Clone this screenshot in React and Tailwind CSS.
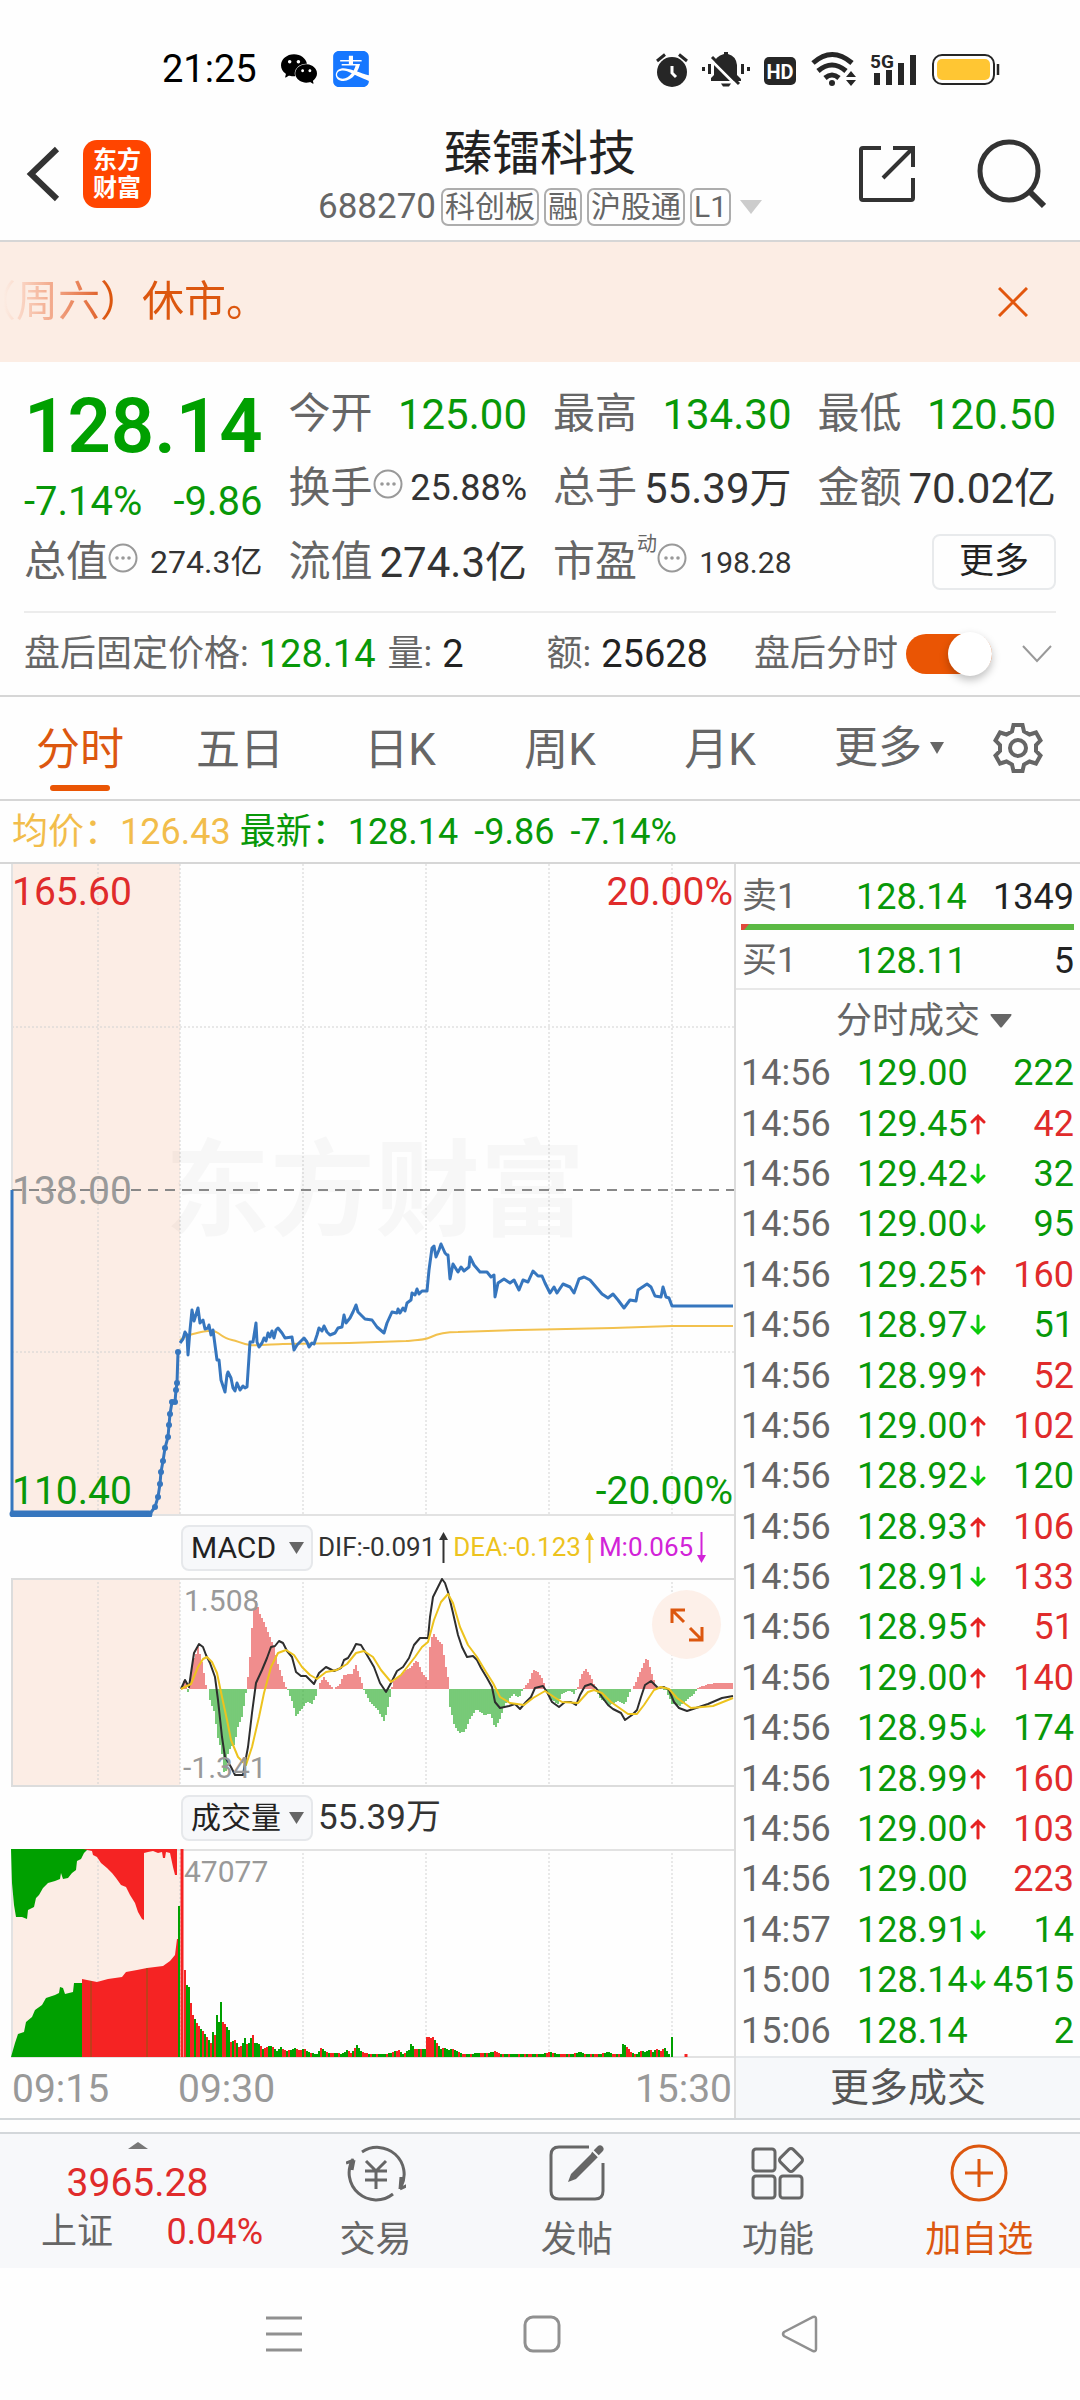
import React, { useState } from 'react';
import { SiWechat, SiAlipay } from 'react-icons/si';

const TABS = ['分时', '五日', '日K', '周K', '月K'];

// [time, price, direction, volume, side]
const TRADES = [
  ['14:56', '129.00', '', '222', 'sell'],
  ['14:56', '129.45', 'up', '42', 'buy'],
  ['14:56', '129.42', 'down', '32', 'sell'],
  ['14:56', '129.00', 'down', '95', 'sell'],
  ['14:56', '129.25', 'up', '160', 'buy'],
  ['14:56', '128.97', 'down', '51', 'sell'],
  ['14:56', '128.99', 'up', '52', 'buy'],
  ['14:56', '129.00', 'up', '102', 'buy'],
  ['14:56', '128.92', 'down', '120', 'sell'],
  ['14:56', '128.93', 'up', '106', 'buy'],
  ['14:56', '128.91', 'down', '133', 'buy'],
  ['14:56', '128.95', 'up', '51', 'buy'],
  ['14:56', '129.00', 'up', '140', 'buy'],
  ['14:56', '128.95', 'down', '174', 'sell'],
  ['14:56', '128.99', 'up', '160', 'buy'],
  ['14:56', '129.00', 'up', '103', 'buy'],
  ['14:56', '129.00', '', '223', 'buy'],
  ['14:57', '128.91', 'down', '14', 'sell'],
  ['15:00', '128.14', 'down', '4515', 'sell'],
  ['15:06', '128.14', '', '2', 'sell'],
];

const GRID_X = [98, 180, 303, 426, 549, 672];

const PRICE =
  '180,479 183,475 185,468 187,471 188,491 190,466 192,446 194,457 198,444 200,459 203,456 205,465 208,464 209,461 211,471 213,466 217,496 219,496 221,516 225,528 227,511 228,508 231,514 233,524 235,527 237,519 240,526 243,522 245,524 247,523 248,508 250,478 253,478 256,459 257,478 259,483 262,479 264,474 266,477 268,469 270,473 272,467 274,474 276,466 278,464 282,469 285,474 292,473 294,486 297,481 301,477 304,474 307,478 309,483 312,479 314,480 317,471 319,464 322,467 324,462 327,468 330,471 335,469 338,464 342,463 344,451 346,459 350,454 353,448 356,441 358,448 365,455 372,456 377,463 384,469 387,459 392,448 397,449 398,445 400,449 403,444 405,447 407,439 411,436 412,429 415,431 417,425 419,430 422,427 427,427 429,406 432,384 434,382 436,393 439,386 441,380 445,389 447,391 448,391 450,415 453,400 458,408 461,403 464,407 469,403 470,393 474,401 480,408 487,408 491,413 494,411 495,433 498,419 504,415 510,419 514,416 519,426 523,416 528,418 533,407 538,412 542,412 545,419 550,429 554,423 557,429 563,420 570,423 574,429 579,415 584,413 590,416 596,423 602,430 608,434 613,430 618,436 624,444 630,436 636,437 638,426 647,420 651,423 655,432 661,433 663,423 666,433 669,434 672,442 733,442';

const AVERAGE =
  'M180 476 C185 472 188 471 193 470 S203 467 208 467 S214 466 218 469 S226 475 232 476 S242 480 250 481 S275 480 283 480 L349 479 L406 477 C420 476 425 476 431 473 S445 468 458 468 L519 466 L613 464 L672 462 H733';

const AUCTION = [
  [149, 651], [155, 643], [158, 633], [160, 620], [161, 608], [163, 597], [165, 584], [168, 573],
  [169, 561], [170, 550], [172, 538], [175, 538], [176, 526], [177, 519], [178, 488],
];

const DIF =
  '181,111 185,102 189,109 191,95 194,75 199,66 203,69 206,77 210,85 215,99 218,122 222,159 225,179 231,189 235,197 243,197 245,185 248,169 252,135 256,105 262,92 267,80 271,69 275,68 279,63 283,65 287,73 292,79 296,94 301,98 306,98 310,102 314,106 319,95 326,89 334,93 341,90 344,82 348,80 353,72 356,66 361,67 367,77 374,89 380,105 386,114 391,105 397,93 403,89 409,80 414,67 420,60 428,60 430,39 433,19 438,9 442,1 445,5 448,14 453,35 458,57 462,69 467,79 473,78 477,82 481,90 487,100 492,109 495,124 500,130 509,128 515,126 520,131 526,124 531,119 535,110 543,108 547,114 552,124 559,129 565,124 571,124 576,127 580,117 585,108 591,106 596,110 602,119 608,127 613,131 621,135 625,142 632,137 637,132 641,119 645,107 651,103 658,110 664,109 669,112 674,124 679,130 687,133 696,130 708,126 722,120 733,118';

const DEA =
  '181,111 191,106 198,89 203,81 207,79 212,84 217,95 222,119 227,142 231,162 238,179 246,187 252,169 259,139 264,115 271,89 278,75 286,72 294,77 302,89 310,97 317,101 326,94 337,92 347,86 356,75 364,73 373,79 381,92 391,104 401,97 415,79 422,69 428,64 434,42 441,24 448,16 453,25 460,49 468,67 477,79 486,94 493,105 500,119 510,125 524,127 533,120 545,113 554,119 562,124 578,125 588,114 594,112 602,115 611,124 628,136 637,136 644,127 654,112 661,109 669,111 677,120 691,130 713,128 733,120';

// histogram outline, [x, height above the zero line]
const MACD_POINTS = [
  [182, 0], [185, 12], [188, -3], [190, 7], [193, 30], [195, 32], [198, 42], [202, 27], [206, 4],
  [208, 0], [210, -11], [215, -25], [217, -45], [220, -56], [223, -70], [225, -97], [227, -68], [231, -58],
  [235, -56], [237, -41], [242, -28], [245, -11], [247, 2], [250, 32], [253, 75], [256, 88],
  [260, 75], [264, 67], [269, 55], [274, 42], [278, 25], [285, 4], [288, -1], [293, -15],
  [296, -27], [301, -21], [307, -13], [312, -15], [317, -5], [319, 4], [324, 12], [330, 4],
  [334, 0], [340, 5], [344, 14], [352, 15], [356, 24], [361, 9], [364, -1], [370, -13],
  [378, -21], [384, -32], [387, -23], [391, -3], [393, 7], [401, 15], [411, 22], [417, 29],
  [422, 17], [428, 9], [430, 42], [433, 57], [437, 50], [442, 45], [446, 22], [449, 7],
  [450, -18], [454, -35], [459, -44], [465, -43], [470, -30], [477, -20], [484, -26], [491, -25],
  [495, -40], [500, -30], [505, -15], [514, -5], [519, -9], [523, 0], [529, 7], [533, 19],
  [538, 17], [543, 10], [546, -1], [552, -11], [558, -15], [562, -5], [569, -1], [574, -5],
  [578, 2], [581, 14], [586, 20], [591, 12], [595, 2], [599, -8], [609, -17], [618, -12],
  [625, -15], [630, -3], [635, 4], [639, 15], [647, 32], [652, 15], [656, 2], [661, 0],
  [666, -1], [672, -15], [680, -17], [687, -11], [694, -5], [698, 1], [708, 5], [717, 6], [732, 6],
];

const VOLUME_POINTS = [
  [184, 87], [186, 72], [188, 70], [190, 54], [192, 42], [196, 34], [199, 29], [203, 25], [207, 18],
  [210, 14], [212, 25], [214, 22], [216, 42], [218, 35], [220, 55], [222, 35], [226, 30], [228, 27],
  [230, 15], [234, 17], [238, 10], [241, 12], [244, 19], [247, 10], [249, 17], [252, 22], [254, 14],
  [258, 13], [262, 8], [268, 11], [272, 10], [276, 6], [280, 10], [285, 6], [290, 7], [294, 9],
  [299, 6], [303, 9], [307, 5], [311, 4], [316, 3], [320, 9], [324, 6], [328, 4], [335, 4],
  [341, 3], [346, 7], [350, 4], [353, 7], [356, 12], [359, 7], [363, 4], [370, 3], [386, 3],
  [392, 5], [398, 7], [402, 3], [408, 7], [410, 13], [414, 8], [424, 8], [426, 20], [430, 19],
  [432, 20], [436, 14], [440, 8], [443, 10], [447, 7], [452, 8], [457, 6], [461, 3], [468, 3],
  [480, 4], [487, 4], [494, 6], [500, 3], [540, 3], [550, 5], [556, 3], [570, 3], [579, 5],
  [584, 3], [600, 3], [607, 5], [612, 3], [620, 3], [622, 13], [626, 10], [631, 4], [636, 3],
  [640, 6], [645, 5], [649, 8], [652, 5], [655, 8], [660, 6], [664, 9], [668, 3],
];
const VOLUME_START = 'rggrrgrrgrgrgrgrgggrrggrgrgrrggrggrgg';
const VOLUME_SIDES = 'ggrggrgrrggrggggrrgrgggrrrgrggrgg';

// linear resample of an outline, one bar each 2px
function toBars(points) {
  const bars = [];
  let i = 0;
  const last = points[points.length - 1][0];
  for (let x = points[0][0]; x <= last; x += 2) {
    while (i < points.length - 2 && points[i + 1][0] <= x) i += 1;
    const [x0, h0] = points[i];
    const [x1, h1] = points[i + 1];
    bars.push([x, Math.round(h0 + ((h1 - h0) * (x - x0)) / (x1 - x0))]);
  }
  return bars;
}

const MACD_BARS = toBars(MACD_POINTS);
const VOLUME_BARS = toBars(VOLUME_POINTS);

function volumeColor(x, i) {
  if (x >= 426 && x <= 433) return '#f52323';
  if (x >= 664 || x === 622) return '#00a000';
  const side = VOLUME_START[i] || VOLUME_SIDES[i % VOLUME_SIDES.length];
  return side === 'r' ? '#f52323' : '#00a000';
}

function VerticalGrid({ height }) {
  return GRID_X.map((x) => (
    <path key={x} d={`M${x} 0V${height}`} stroke="#d2d2d2" strokeWidth="1" strokeDasharray="2 2" />
  ));
}

function StatusBar() {
  return (
    <div className="flex h-[108px] items-center justify-between pt-[30px] pr-[80px] pl-[162px]">
      <div className="flex items-center">
        <span className="text-[38px] leading-[40px] text-black">21:25</span>
        <SiWechat className="ml-6 size-[36px] text-black" />
        <SiAlipay className="ml-4 size-[36px] text-[#1677ff]" />
      </div>
      <svg className="h-[36px] w-[344px]" viewBox="656 50 344 36" fill="none" stroke="#262626">
        <circle cx="672" cy="71" r="15" fill="#262626" stroke="none" />
        <path d="M657 60l8-6.500M687 60l-8-6.500" strokeWidth="3" />
        <path d="M672 65v7l4 4" stroke="#fff" strokeWidth="3" />
        <path d="M711 80v-3l3-3V64q1-9 10-11v-2h4v2q8 2 9 11v10l4 4v2z" fill="#262626" stroke="none" />
        <path d="M721 82.500h10l-2 3h-6z" fill="#262626" stroke="none" />
        <path d="M710 58l27 27" stroke="#fff" strokeWidth="3" />
        <path d="M712 56l27 27" strokeWidth="3" />
        <path d="M709.500 63v10M742.500 63v10M703.500 66v4M748.500 66v4" strokeWidth="3" />
        <rect x="764" y="56" width="32" height="28" rx="5" fill="#262626" stroke="none" />
        <text x="780" y="77.500" textAnchor="middle" className="text-[20px] font-bold" fill="#fff" stroke="none">HD</text>
        <path d="M813 62q19-17 39 0M818 70q14-12 28 0M825 77q7-6 14 0" strokeWidth="5" />
        <circle cx="832" cy="82" r="3" fill="#262626" stroke="none" />
        <path d="M846 76l5-6 5 6zM846 79l5 6 5-6z" fill="#262626" stroke="none" />
        <text x="870" y="67" className="text-[19px] font-bold" fill="#262626" stroke="none">5G</text>
        <path d="M877 72v12M889 69v15M901 62v22M913 54v30" strokeWidth="6" />
        <rect x="933" y="54" width="61" height="29" rx="9" strokeWidth="2" />
        <rect x="937" y="58" width="53" height="21" rx="5" fill="#ffc633" stroke="none" />
        <path d="M998 63v11" strokeWidth="2.500" />
      </svg>
    </div>
  );
}

function Badge({ children }) {
  return (
    <span className="rounded-[7px] border-2 border-[#adadad] px-[2px] text-[30px] leading-[34px] text-[#666]">
      {children}
    </span>
  );
}

function Header() {
  return (
    <header className="flex h-[134px] items-center justify-between border-b-2 border-[#d6d6d6] pr-[34px] pl-[26px]">
      <div className="flex w-[248px] items-center gap-[23px]">
        <button type="button" aria-label="返回">
          <svg className="h-[56px] w-[34px]" viewBox="0 0 34 56" fill="none" stroke="#333" strokeWidth="6">
            <path d="M31 3L5 28l26 25" />
          </svg>
        </button>
        <a
          href="#home"
          className="flex h-[68px] w-[68px] flex-col items-center justify-center rounded-[14px] bg-[#ff4500] text-[24px] leading-[28px] font-bold text-white"
        >
          <span>东方</span>
          <span>财富</span>
        </a>
      </div>
      <div className="flex flex-col items-center">
        <h1 className="text-[48px] leading-[64px] text-[#222]">臻镭科技</h1>
        <button type="button" className="mt-[2px] flex items-center gap-[5px]">
          <span className="text-[35px] leading-[38px] text-[#666]">688270</span>
          <Badge>科创板</Badge>
          <Badge>融</Badge>
          <Badge>沪股通</Badge>
          <Badge>L1</Badge>
          <svg className="ml-1 h-[14px] w-[22px]" viewBox="0 0 22 14">
            <path d="M0 0h22L11 14z" fill="#ccc" />
          </svg>
        </button>
      </div>
      <div className="flex w-[240px] items-center justify-end gap-[60px]">
        <button type="button" aria-label="分享">
          <svg className="size-[58px]" viewBox="0 0 58 58" fill="none" stroke="#333" strokeWidth="4">
            <path d="M23 3H5q-2 0-2 2v48q0 2 2 2h48q2 0 2-2V33" />
            <path d="M35 3h20v19M55 3L25 33" />
          </svg>
        </button>
        <button type="button" aria-label="搜索">
          <svg className="size-[70px]" viewBox="0 0 70 70" fill="none" stroke="#333">
            <circle cx="33" cy="32" r="29" strokeWidth="5" />
            <path d="M53 52l15 15" strokeWidth="6" />
          </svg>
        </button>
      </div>
    </header>
  );
}

function Notice() {
  return (
    <div className="flex h-[120px] items-center justify-between overflow-hidden bg-[#fcede4] pr-[52px]">
      <p className="-ml-[26px] bg-linear-to-r from-[#fcede4] from-10% to-[#dc570f] to-45% bg-clip-text text-[42px] leading-[60px] whitespace-nowrap text-transparent">
        （周六）休市。
      </p>
      <button type="button" aria-label="关闭">
        <svg className="size-[30px]" viewBox="0 0 30 30" fill="none" stroke="#e2560d" strokeWidth="3">
          <path d="M1 1l28 28M29 1L1 29" />
        </svg>
      </button>
    </div>
  );
}

function MoreInfo() {
  return (
    <svg className="size-[30px]" viewBox="0 0 30 30" fill="#999">
      <circle cx="15" cy="15" r="13.500" fill="none" stroke="#999" strokeWidth="2" />
      <circle cx="9" cy="15" r="1.800" />
      <circle cx="15" cy="15" r="1.800" />
      <circle cx="21" cy="15" r="1.800" />
    </svg>
  );
}

function Stat({ label, info, sup, children }) {
  return (
    <div className="flex h-[74px] items-center justify-between whitespace-nowrap">
      <dt className="flex items-center text-[42px] leading-[60px] text-[#666]">
        {label}
        {sup && <span className="self-start text-[20px] leading-[24px]">{sup}</span>}
        {info && (
          <button type="button" aria-label={`${label}说明`} className="pb-2">
            <MoreInfo />
          </button>
        )}
      </dt>
      {children}
    </div>
  );
}

function Quote() {
  return (
    <section className="px-6 pt-[15px]">
      <dl className="grid grid-cols-4 gap-x-[26px]">
        <div className="row-span-2 pt-[9px] text-[#089808]">
          <dd className="text-center text-[76px] leading-[80px] font-semibold text-[#00a000]">128.14</dd>
          <dd className="mt-4 flex justify-between text-[40px] leading-[40px]">
            <span>-7.14%</span>
            <span>-9.86</span>
          </dd>
        </div>
        <Stat label="今开">
          <dd className="text-[42px] text-[#089808]">125.00</dd>
        </Stat>
        <Stat label="最高">
          <dd className="text-[42px] text-[#089808]">134.30</dd>
        </Stat>
        <Stat label="最低">
          <dd className="text-[42px] text-[#089808]">120.50</dd>
        </Stat>
        <Stat label="换手" info>
          <dd className="text-[36px] text-[#333]">25.88%</dd>
        </Stat>
        <Stat label="总手">
          <dd className="text-[42px] text-[#333]">55.39万</dd>
        </Stat>
        <Stat label="金额">
          <dd className="text-[42px] text-[#333]">70.02亿</dd>
        </Stat>
        <Stat label="总值" info>
          <dd className="text-[32px] text-[#333]">274.3亿</dd>
        </Stat>
        <Stat label="流值">
          <dd className="text-[42px] text-[#333]">274.3亿</dd>
        </Stat>
        <Stat label="市盈" info sup="动">
          <dd className="text-[30px] text-[#333]">198.28</dd>
        </Stat>
        <div className="flex h-[74px] items-center justify-end">
          <button type="button" className="h-[56px] w-[124px] rounded-[8px] border-2 border-[#e8eaec] text-[35px] leading-[48px] text-[#222]">
            更多
          </button>
        </div>
      </dl>
      <div className="mt-3 flex h-[84px] items-center border-t-2 border-[#ececec] text-[36px] text-[#666]">
        <span>盘后固定价格:</span>
        <span className="ml-[10px] text-[38px] text-[#089808]">128.14</span>
        <span className="ml-3">量:</span>
        <span className="ml-[10px] text-[38px] text-[#222]">2</span>
        <span className="ml-auto">额:</span>
        <span className="ml-[10px] text-[38px] text-[#222]">25628</span>
        <label htmlFor="afterHours" className="ml-[46px]">盘后分时</label>
        <input
          id="afterHours"
          type="checkbox"
          defaultChecked
          className="ml-2 flex h-[40px] w-[86px] appearance-none items-center rounded-full bg-[#ccc] before:size-[44px] before:rounded-full before:bg-white before:shadow-[0_4px_8px_rgba(0,0,0,0.25)] checked:justify-end checked:bg-[#ea5504]"
        />
        <button type="button" aria-label="展开" className="mr-1 ml-[30px]">
          <svg className="h-[18px] w-[30px]" viewBox="0 0 30 18" fill="none" stroke="#999" strokeWidth="2">
            <path d="M1 1l14 15L29 1" />
          </svg>
        </button>
      </div>
    </section>
  );
}

function Tabs() {
  const [active, setActive] = useState('分时');

  return (
    <nav className="flex h-[106px] items-center border-y-2 border-[#d6d6d6] pr-[36px] text-[44px] text-[#666]">
      {TABS.map((tab) => (
        <button
          key={tab}
          type="button"
          onClick={() => setActive(tab)}
          className={`flex h-full w-[160px] flex-col items-center pt-[20px] leading-[66px] ${
            active === tab ? 'text-[#dc570f]' : ''
          }`}
        >
          {tab}
          {active === tab && <span className="mt-[2px] h-[6px] w-[60px] rounded-full bg-[#ea5504]" />}
        </button>
      ))}
      <button type="button" className="ml-auto flex items-center gap-2 leading-[66px]">
        更多
        <svg className="h-[12px] w-[14px]" viewBox="0 0 14 12">
          <path d="M0 0h14L7 12z" fill="#666" />
        </svg>
      </button>
      <button type="button" aria-label="设置" className="ml-[48px]">
        <svg className="size-[52px]" viewBox="0 0 52 52" fill="none" stroke="#666" strokeWidth="4">
          <path d="M21.500 3h9l1.500 6.500 5.500 3 6.500-2 4.500 8-4.500 4.500v6l4.500 4.500-4.500 8-6.500-2-5.500 3-1.500 6.500h-9l-1.500-6.500-5.500-3-6.500 2-4.500-8L8 29v-6l-4.500-4.500 4.500-8 6.500 2 5.500-3z" />
          <circle cx="26" cy="26" r="8" />
        </svg>
      </button>
    </nav>
  );
}

function PriceChart() {
  return (
    <svg className="block w-full" viewBox="0 0 734 653" fill="none">
      <rect x="12" y="0" width="168" height="651" fill="#fcede5" />
      <VerticalGrid height={651} />
      <path d="M12 163H734M12 488H734" stroke="#d2d2d2" strokeDasharray="2 2" />
      <path d="M12 0V651H734" stroke="#e2e2e2" strokeWidth="2" />
      <text x="165" y="363" className="text-[105px] font-bold" fill="#000" fillOpacity="0.027">东方财富</text>
      <path d="M12 326H734" stroke="#888" strokeWidth="2" strokeDasharray="10 7" />
      <text x="12" y="340" className="text-[39px]" fill="#999">138.00</text>
      <path d={AVERAGE} stroke="#f2c14e" strokeWidth="2" />
      <polyline points={PRICE} stroke="#3676be" strokeWidth="3" strokeLinejoin="round" />
      <path d="M12 326V650" stroke="#3676be" strokeWidth="3" />
      <path d="M13 650H149" stroke="#3676be" strokeWidth="7" strokeLinecap="round" />
      <polyline points={AUCTION.join(' ')} stroke="#3676be" strokeWidth="3" />
      {AUCTION.map(([x, y]) => (
        <circle key={`${x}-${y}`} cx={x} cy={y} r="3" fill="#3676be" />
      ))}
      <text x="12" y="41" className="text-[39px]" fill="#e02b2b">165.60</text>
      <text x="733" y="41" textAnchor="end" className="text-[39px]" fill="#e02b2b">20.00%</text>
      <text x="12" y="640" className="text-[39px]" fill="#089808">110.40</text>
      <text x="733" y="640" textAnchor="end" className="text-[39px]" fill="#089808">-20.00%</text>
    </svg>
  );
}

function MacdChart() {
  return (
    <div className="relative">
      <svg className="block w-full" viewBox="0 0 734 209" fill="none">
        <rect x="12" y="0" width="168" height="208" fill="#fcede5" />
        <VerticalGrid height={208} />
        <path d="M12 1H734M12 0V208H734" stroke="#dcdcdc" strokeWidth="2" />
        {MACD_BARS.map(([x, h]) => (
          <path key={x} d={`M${x} 111v${-h}`} stroke={h > 0 ? '#e85050' : '#2fae2f'} strokeWidth="1.300" />
        ))}
        <polyline points={DIF} stroke="#2e2e2e" strokeWidth="2" strokeLinejoin="round" />
        <polyline points={DEA} stroke="#edc31e" strokeWidth="2" strokeLinejoin="round" />
        <text x="184" y="33" className="text-[30px]" fill="#999">1.508</text>
        <text x="183" y="200" className="text-[30px]" fill="#999">-1.341</text>
      </svg>
      <button
        type="button"
        aria-label="全屏"
        className="absolute top-[12px] right-[13px] flex size-[69px] items-center justify-center rounded-full bg-[#fdf0e9]"
      >
        <svg className="size-[36px]" viewBox="0 0 36 36" fill="none" stroke="#dc570f" strokeWidth="3">
          <path d="M3 16V3h13M3 3l12 12M33 20v13H20M33 33L21 21" />
        </svg>
      </button>
    </div>
  );
}

function VolumeChart() {
  return (
    <svg className="block w-full" viewBox="0 0 734 209" fill="none">
      <rect x="12" y="0" width="168" height="208" fill="#fcede5" />
      <VerticalGrid height={208} />
      <path d="M12 1H734M12 0V208H734" stroke="#e2e2e2" strokeWidth="2" />
      <path
        d="M11 0L12 34 14 56 16 68 22 68 27 70 28 61 34 58 36 49 39 46 43 39 48 34 55 32 60 30 61 24 63 30 68 29 72 24 76 21 77 12 81 10 84 4 88 0z"
        fill="#00a000"
      />
      <path
        d="M83 0L92 2 93 6 97 8 101 14 107 19 112 24 116 29 121 36 126 38 130 46 135 54 138 63 142 70 144 71 144 4 148 3 153 2 158 4 162 3 163 9 165 9 166 3 170 4 173 18 175 26 177 26 177 0z"
        fill="#f52323"
      />
      <path
        d="M11 208L15 194 18 185 24 183 26 173 32 168 35 161 42 156 46 149 55 146 59 144 60 138 63 139 65 145 73 143 74 134 82 134V208z"
        fill="#00a000"
      />
      <path
        d="M82 208V130L97 133 108 130 122 128 126 123 137 121 147 119 163 117 170 112 175 106 177 90 179 90V208z"
        fill="#f52323"
      />
      <path d="M91 132V208M147 119V208" stroke="#8c5a12" strokeWidth="1" />
      <path d="M179 57V208" stroke="#00a000" strokeWidth="2" />
      <path d="M182 0V208" stroke="#f52323" strokeWidth="3" />
      {VOLUME_BARS.map(([x, h], i) => (
        <path key={x} d={`M${x + 1} 208v${-h}`} stroke={volumeColor(x, i)} strokeWidth="2" />
      ))}
      <path d="M672 208v-20" stroke="#00a000" strokeWidth="2" />
      <path d="M686 208v-3" stroke="#f52323" strokeWidth="3" />
      <text x="184" y="33" className="text-[30px]" fill="#999">47077</text>
    </svg>
  );
}

function IndicatorSelect({ label, options }) {
  return (
    <label className="relative flex">
      <select
        aria-label={label}
        className="h-[46px] w-[132px] appearance-none rounded-[8px] border-2 border-[#e6e8eb] bg-[#f7f8fa] pl-2 text-[30px] leading-[42px] text-[#222]"
      >
        {options.map((option) => (
          <option key={option}>{option}</option>
        ))}
      </select>
      <svg className="pointer-events-none absolute top-[17px] right-[9px] h-[12px] w-[15px]" viewBox="0 0 15 12">
        <path d="M0 0h15L7.500 12z" fill="#666" />
      </svg>
    </label>
  );
}

function Arrow({ down }) {
  return (
    <svg className="h-[31px] w-[9px]" viewBox="0 0 9 31" fill="currentColor">
      {down ? <path d="M3.500 0h2v23H9L4.500 31 0 23h3.500z" /> : <path d="M3.500 31h2V8H9L4.500 0 0 8h3.500z" />}
    </svg>
  );
}

function Charts() {
  return (
    <div className="min-w-0 flex-1">
      <PriceChart />
      <div className="flex h-[61px] items-center gap-[5px] pl-[181px] text-[26px] whitespace-nowrap">
        <IndicatorSelect label="副图指标" options={['MACD', 'KDJ', 'RSI']} />
        <span className="flex items-center gap-1 text-[#333]">
          DIF:-0.091
          <Arrow />
        </span>
        <span className="flex items-center gap-1 text-[#edc31e]">
          DEA:-0.123
          <Arrow />
        </span>
        <span className="flex items-center gap-1 text-[#d223d8]">
          M:0.065
          <Arrow down />
        </span>
      </div>
      <MacdChart />
      <div className="flex h-[62px] items-center gap-[5px] pl-[181px]">
        <IndicatorSelect label="成交指标" options={['成交量', '成交额']} />
        <span className="text-[35px] text-[#333]">55.39万</span>
      </div>
      <VolumeChart />
      <div className="flex h-[60px] items-center pt-[2px] pr-[2px] pl-[12px] text-[39px] text-[#999]">
        <span className="w-[166px]">09:15</span>
        <span>09:30</span>
        <span className="ml-auto">15:30</span>
      </div>
    </div>
  );
}

function Tick({ direction }) {
  if (!direction) return null;
  return (
    <svg
      className="h-[22px] w-[16px] shrink-0"
      viewBox="0 0 16 22"
      fill="none"
      stroke={direction === 'up' ? '#e52222' : '#0acb0a'}
      strokeWidth="3"
      strokeLinecap="round"
    >
      {direction === 'up' ? <path d="M8 20V3M2 9l6-6 6 6" /> : <path d="M8 2v17M2 13l6 6 6-6" />}
    </svg>
  );
}

function OrderBook() {
  return (
    <aside className="flex w-[346px] shrink-0 flex-col border-l-2 border-[#dcdcdc] text-[36px]">
      <div className="flex h-[60px] items-center pt-[6px] pr-[6px] pl-[6px]">
        <span className="w-[114px] text-[35px] text-[#666]">卖1</span>
        <span className="text-[#089808]">128.14</span>
        <span className="ml-auto text-[#222]">1349</span>
      </div>
      <svg className="mr-[6px] ml-[5px] h-[6px]" viewBox="0 0 333 6" preserveAspectRatio="none">
        <path d="M0 0h333v6H0z" fill="#5bb944" />
        <path d="M0 0h8L3 6H0z" fill="#e04a3c" />
      </svg>
      <div className="flex h-[60px] items-center border-b-2 border-[#e8e8e8] pt-1 pr-[6px] pl-[6px]">
        <span className="w-[114px] text-[35px] text-[#666]">买1</span>
        <span className="text-[#089808]">128.11</span>
        <span className="ml-auto text-[#222]">5</span>
      </div>
      <label className="flex h-[58px] items-center justify-center gap-2 pt-1 pl-8">
        <select aria-label="成交明细" className="w-[146px] appearance-none text-[36px] leading-[50px] text-[#666]">
          <option>分时成交</option>
          <option>分价成交</option>
        </select>
        <svg className="h-[14px] w-[22px]" viewBox="0 0 22 14">
          <path d="M1 0h20q1 0 0 2L12 13q-1 1-2 0L1 2q-1-2 0-2z" fill="#666" />
        </svg>
      </label>
      <table className="h-[1008px] w-full table-fixed leading-[44px]">
        <tbody>
          {TRADES.map(([time, price, direction, volume, side], i) => (
            <tr key={i}>
              <td className="w-[121px] p-0 pl-[5px] text-[#666]">{time}</td>
              <td className="w-[130px] p-0 text-[#089808]">
                <span className="flex items-center gap-[2px]">
                  {price}
                  <Tick direction={direction} />
                </span>
              </td>
              <td className={`p-0 pr-[6px] text-right ${side === 'buy' ? 'text-[#e02b2b]' : 'text-[#089808]'}`}>
                {volume}
              </td>
            </tr>
          ))}
        </tbody>
      </table>
      <button type="button" className="w-full flex-1 border-t-2 border-[#e6e9ec] bg-[#f6f8fa] text-[39px] leading-[60px] text-[#555]">
        更多成交
      </button>
    </aside>
  );
}

function NavItem({ label, active, children }) {
  return (
    <a href={`#${label}`} className={`flex flex-1 flex-col items-center ${active ? 'text-[#dc570f]' : 'text-[#666]'}`}>
      <svg className="mt-[9px] size-[60px]" viewBox="0 0 60 60" fill="none" stroke="currentColor" strokeWidth="3">
        {children}
      </svg>
      <span className="mt-[13px] text-[36px] leading-[48px]">{label}</span>
    </a>
  );
}

function BottomNav() {
  return (
    <nav className="mt-3 flex h-[136px] border-t-2 border-[#d3d7da] bg-[#f7f8fa]">
      <a href="#index" className="flex w-[275px] flex-col items-center pt-2 text-[#e02b2b]">
        <svg className="h-[7px] w-[20px]" viewBox="0 0 20 7">
          <path d="M0 7h20L10 0z" fill="#777" />
        </svg>
        <span className="mt-[10px] text-[39px] leading-[48px]">3965.28</span>
        <span className="flex w-full justify-between pr-[12px] pl-[41px] text-[36px] leading-[50px]">
          <span className="text-[#666]">上证</span>
          <span>0.04%</span>
        </span>
      </a>
      <NavItem label="交易">
        <path d="M16 9A27 27 0 0 1 55 44M54 46l1-12M54 46l8-4" />
        <path d="M47 51A27 27 0 0 1 7 16M8 17l-8 3M8 17l-2 10" />
        <path d="M20 18l10 10 10-10M30 28v18M19 28h22M19 37h22" />
      </NavItem>
      <NavItem label="发帖">
        <path d="M42 4H12q-8 0-8 8v36q0 8 8 8h36q8 0 8-8V20" />
        <path d="M21 39l3-8 22-22 5 5-22 22z" fill="currentColor" stroke="none" />
        <path d="M48 11l5-5" strokeWidth="7" strokeLinecap="round" />
        <path d="M45 7l8 8" stroke="#f7f8fa" strokeWidth="2" />
      </NavItem>
      <NavItem label="功能">
        <rect x="5" y="6" width="22" height="22" rx="3" />
        <rect x="5" y="33" width="22" height="22" rx="3" />
        <rect x="32" y="33" width="22" height="22" rx="3" />
        <rect x="34" y="8" width="18" height="18" rx="3" transform="rotate(45 43 17)" />
      </NavItem>
      <NavItem label="加自选" active>
        <circle cx="30" cy="30" r="27" />
        <path d="M30 16v28M16 30h28" />
      </NavItem>
    </nav>
  );
}

function SystemNav() {
  return (
    <div className="flex h-[132px] items-center justify-center gap-[220px] pl-1 text-[#909090]">
      <button type="button" aria-label="最近任务">
        <svg className="size-[38px]" viewBox="0 0 38 38" fill="none" stroke="currentColor" strokeWidth="3">
          <path d="M1 3h36M1 19h36M1 35h36" />
        </svg>
      </button>
      <button type="button" aria-label="主屏幕">
        <svg className="size-[38px]" viewBox="0 0 38 38" fill="none" stroke="currentColor" strokeWidth="3">
          <rect x="2" y="2" width="34" height="34" rx="8" />
        </svg>
      </button>
      <button type="button" aria-label="后退">
        <svg className="size-[38px]" viewBox="0 0 38 38" fill="none" stroke="currentColor" strokeWidth="2.500">
          <path d="M3 17L32 2q3-1 3 2v30q0 3-3 2L3 21q-2-2 0-4z" />
        </svg>
      </button>
    </div>
  );
}

function App() {
  return (
    <div className="bg-[#fefefe] font-[Roboto,'Noto_Sans_CJK_SC',sans-serif]">
      <StatusBar />
      <Header />
      <Notice />
      <Quote />
      <Tabs />
      <div className="flex h-[63px] items-center border-b-2 border-[#d6d6d6] pl-[12px] text-[36px] text-[#089808]">
        <span className="text-[#f2bd4b]">均价：126.43</span>
        <span className="ml-[9px]">最新：128.14</span>
        <span className="ml-4">-9.86</span>
        <span className="ml-4">-7.14%</span>
      </div>
      <main className="flex border-b-2 border-[#d3d7da]">
        <Charts />
        <OrderBook />
      </main>
      <BottomNav />
      <SystemNav />
    </div>
  );
}

export default App;
